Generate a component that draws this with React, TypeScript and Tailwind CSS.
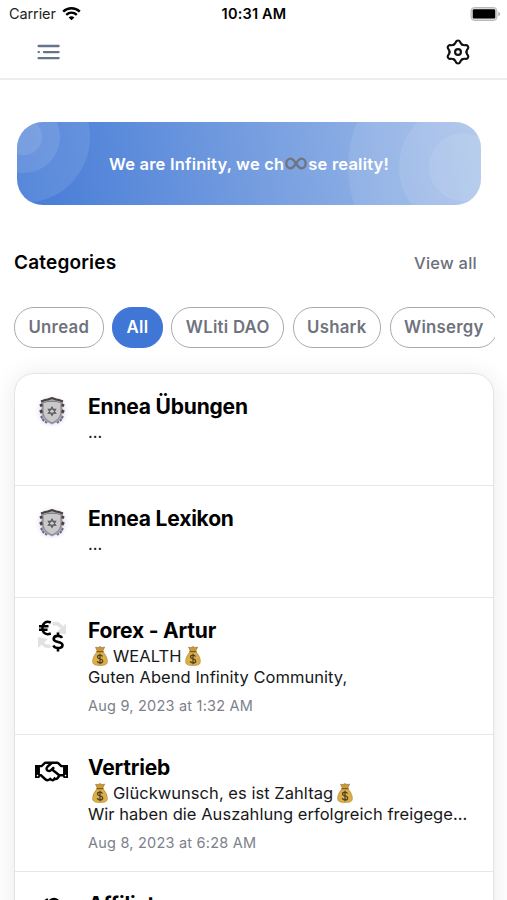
import { FaRegHandshake } from "react-icons/fa";

const categories = ["Unread", "All", "WLiti DAO", "Ushark", "Winsergy"];

type Channel = {
  title: string;
  icon: "crest" | "forex" | "handshake" | "people";
  lines: string[];
  date?: string;
};

const channels: Channel[] = [
  { title: "Ennea Übungen", icon: "crest", lines: ["..."] },
  { title: "Ennea Lexikon", icon: "crest", lines: ["..."] },
  {
    title: "Forex - Artur",
    icon: "forex",
    lines: ["$WEALTH$", "Guten Abend Infinity Community,"],
    date: "Aug 9, 2023 at 1:32 AM",
  },
  {
    title: "Vertrieb",
    icon: "handshake",
    lines: [
      "$Glückwunsch, es ist Zahltag$",
      "Wir haben die Auszahlung erfolgreich freigege...",
    ],
    date: "Aug 8, 2023 at 6:28 AM",
  },
  { title: "Affiliate", icon: "people", lines: [] },
];

function WifiIcon() {
  return (
    <svg className="h-[14px] w-[19px]" viewBox="0 0 19 14" fill="none" stroke="#000">
      <path d="M1.2 4.6c4.8-4.4 11.8-4.4 16.6 0" strokeWidth="2.5" />
      <path d="M4.2 7.9c3.1-2.8 7.5-2.8 10.6 0" strokeWidth="2.4" />
      <path d="M9.5 13.2 6.6 10.4c1.7-1.5 4.1-1.5 5.8 0z" fill="#000" stroke="none" />
    </svg>
  );
}

function BatteryIcon() {
  return (
    <svg className="h-[15px] w-[31px]" viewBox="0 0 31 15">
      <rect x="1" y=".5" width="26" height="13" rx="3.5" fill="#d8d8d8" stroke="#b9b9b9" />
      <rect x="2.8" y="2.3" width="22.4" height="9.2" rx="1.3" fill="#000" />
      <path d="M28.3 4.8c2.3.9 2.3 3.6 0 4.5z" fill="#aaa" />
    </svg>
  );
}

function MenuIcon() {
  return (
    <svg className="h-4 w-[23px]" viewBox="0 0 23 16" stroke="#64748b" strokeWidth="2.3" strokeLinecap="round">
      <path d="M1.6 2h20M6.9 8.1h14.7M1.6 8.1h.3M1.6 14.2h20" />
    </svg>
  );
}

const gearLobes = [0, 60, 120, 180, 240, 300];

function GearIcon() {
  return (
    <svg className="h-[26px] w-[26px]" viewBox="0 0 24 24" fill="none" stroke="#111" strokeWidth="2" strokeLinecap="round">
      {gearLobes.map((angle) => (
        <path
          key={angle}
          d="M8.1 5.25C9.5 4.45 9.7 3.8 10.1 2.6 10.6 1 13.4 1 13.9 2.6 14.3 3.8 14.5 4.45 15.9 5.25"
          transform={`rotate(${angle} 12 12)`}
        />
      ))}
      <circle cx="12" cy="12" r="2.7" />
    </svg>
  );
}

function InfinityIcon() {
  return (
    <svg className="mx-px h-[14px] w-[22px]" viewBox="0 0 22 14" fill="none" stroke="#6f7580" strokeWidth="2.3">
      <path d="M11 6.5C8.8 3.2 7.4 1.7 5.6 1.7a4.3 4.8 0 0 0 0 9.6C7.4 11.3 8.8 9.8 11 6.5s3.6-4.8 5.4-4.8a4.3 4.8 0 0 1 0 9.6C14.6 11.3 13.2 9.8 11 6.5z" />
    </svg>
  );
}

function MoneyBag() {
  return (
    <svg className="mr-[5px] ml-1 inline-block h-5 w-4 align-[-4px]" viewBox="0 0 16 20">
      <path d="M3.5 1.2 6 1.6 8 .5l2 1.1 2.7-.6L10.6 5.5H5.4z" fill="#c79a3c" stroke="#8d6420" strokeWidth=".5" />
      <path d="M5.3 5.6h5.4c2.6 2.3 4.7 6.3 4.7 9.6 0 3.2-1.8 4.3-7.4 4.3S.6 18.4.6 15.2c0-3.3 2.1-7.3 4.7-9.6z" fill="#dcae48" stroke="#a67a2a" strokeWidth=".5" />
      <path d="M4.9 5.7h6.2" stroke="#8a5a1c" strokeWidth="1.3" strokeLinecap="round" />
      <path d="M10.5 10.5C10 9.6 9.2 9.2 8 9.2c-1.5 0-2.5.7-2.5 1.8 0 2.7 5.2 1.2 5.2 3.9 0 1.2-1.1 1.9-2.7 1.9-1.4 0-2.4-.5-2.800-1.500M8 7.800v10.400" fill="none" stroke="#4f4224" strokeWidth="1.3" />
    </svg>
  );
}

function CrestIcon() {
  return (
    <svg className="h-[36px] w-[36px]" viewBox="0 0 36 36">
      <defs>
        <radialGradient id="crest-glow">
          <stop offset=".6" stopColor="#e6e6f8" />
          <stop offset="1" stopColor="#e6e6f8" stopOpacity="0" />
        </radialGradient>
      </defs>
      <circle cx="18" cy="18" r="17" fill="url(#crest-glow)" />
      <path d="M7 8.5 12 6l6-2 6 2 5 2.5-1 5 1 4-1 4 1 4-5 3-6 3-6-3-5-3 1-4-1-4 1-4z" fill="#aaa6b3" />
      <path d="M7 8.5 11 7l3-.5 4-1.5 4 1.500 3 .5 4 1.500" fill="none" stroke="#4b4043" strokeWidth="2" />
      <path d="m6.5 11 1.5 2.5M6.5 17l1.5 3M29.5 11 28 13.5M29.5 17 28 20" stroke="#4b3f40" strokeWidth="2.8" />
      <path d="m7 23 2 4 4 3M29 23l-2 4-4 3" fill="none" stroke="#66708e" strokeWidth="2" strokeDasharray="2.5 1" />
      <path d="M9 9.5c6-1.5 12-1.5 18 0v9c0 5-3.5 9-9 11.5-5.5-2.5-9-6.5-9-11.5z" fill="#cac9c9" stroke="#7d797d" strokeWidth=".9" />
      <path d="m18 14 3.700 6.300h-7.400zM18 22.500l-3.700-6.300h7.400z" fill="none" stroke="#5b5b5f" strokeWidth="1.1" />
    </svg>
  );
}

function ForexIcon() {
  return (
    <svg className="h-[36px] w-[36px]" viewBox="0 0 36 36" fill="none">
      <path d="M18.5 7.5c4-2 7-.5 9 3" stroke="#e2e2e2" strokeWidth="3.5" />
      <path d="M32 6.5v11l-10-2z" fill="#e2e2e2" />
      <path d="M16.5 29c-4 1-6.5 0-8.5-3.5" stroke="#e2e2e2" strokeWidth="3.5" />
      <path d="M4 31V20l10 2z" fill="#e2e2e2" />
      <path d="M16.8 5.5c-5-2-8.3.6-8.3 5.5s3.3 7.5 8.3 5.5M5 9.2h9.5M5 12.8h8.5" stroke="#000" strokeWidth="2.5" />
      <path d="M28 21c-.8-1.5-2.1-2.1-4.2-2.1-2.4 0-4.1 1-4.1 3 0 4 8.8 2.1 8.8 6.1 0 2-1.7 3.1-4.3 3.1-2.4 0-4-.9-4.9-2.6M24 15.5v3M24 31v3.5" stroke="#000" strokeWidth="2.6" />
    </svg>
  );
}

function PeopleIcon() {
  return (
    <svg className="mt-1.5 h-8 w-8" viewBox="0 0 32 32" fill="none" stroke="#000" strokeWidth="2.4">
      <path d="M7 5.5 11 2.6M13.5 6a4.8 4.8 0 0 1 9 0" strokeLinecap="round" />
      <circle cx="18" cy="7" r="5" />
      <path d="M8 26c0-8 20-8 20 0zM4 22c0-5 3-7 7-7" />
    </svg>
  );
}

function ChannelIcon({ icon }: { icon: Channel["icon"] }) {
  if (icon === "crest") return <CrestIcon />;
  if (icon === "forex") return <ForexIcon />;
  if (icon === "people") return <PeopleIcon />;
  return <FaRegHandshake className="h-[35px] w-[33px]" />;
}

// "$" marks the place of a money bag
function Line({ text }: { text: string }) {
  return (
    <p className="truncate">
      {text.split("$").map((part, i) => (
        <span key={i}>
          {i > 0 && <MoneyBag />}
          {part}
        </span>
      ))}
    </p>
  );
}

function ChannelRow({ channel }: { channel: Channel }) {
  return (
    <li className={`flex border-b border-[#e6e6e8] pt-[17px] ${channel.date ? "h-[137px]" : "h-[112px]"}`}>
      <div className="flex w-[73px] shrink-0 justify-center pt-0.5">
        <ChannelIcon icon={channel.icon} />
      </div>
      <div className="min-w-0 flex-1 pr-3">
        <h3 className="text-[21px] leading-8 font-bold tracking-[-0.2px]">{channel.title}</h3>
        <div className="-mt-px text-[16.5px] leading-[20.5px] tracking-[0.04px] text-[#17181a]">
          {channel.lines.map((line) => (
            <Line key={line} text={line} />
          ))}
        </div>
        {channel.date && (
          <p className="mt-2 text-[14.5px] leading-[21px] tracking-[0.22px] text-[#7c818b]">{channel.date}</p>
        )}
      </div>
    </li>
  );
}

export default function App() {
  return (
    <div className="h-[900px] w-[507px] overflow-hidden bg-white font-['Inter',sans-serif] text-black">
      <div className="grid h-7 grid-cols-3 items-center pr-1.5 pl-[9px] text-[14.5px]">
        <div className="flex items-center gap-1.5 tracking-[-0.1px] text-[#222]">
          Carrier
          <WifiIcon />
        </div>
        <div className="-ml-0.5 text-center font-semibold tracking-[0.2px] whitespace-nowrap">10:31 AM</div>
        <div className="flex justify-end">
          <BatteryIcon />
        </div>
      </div>
      <header className="flex h-[52px] items-center justify-between border-b-2 border-[#ededed] pr-9 pb-0.5 pl-[37px]">
        <MenuIcon />
        <GearIcon />
      </header>

      <section className="relative mt-[42px] ml-[17px] flex h-[83px] w-[464px] items-center justify-center overflow-hidden rounded-[26px] bg-linear-[80deg] from-[#447ad6] to-[#a4bfe9]">
        <svg className="absolute inset-0 h-full w-full" viewBox="0 0 464 83" fill="#fff">
          <g fillOpacity=".1">
            <circle cx="7" cy="15" r="66" />
            <circle cx="7" cy="15" r="36" />
            <circle cx="7" cy="15" r="18" />
          </g>
          <g fillOpacity=".09">
            <circle cx="446" cy="45" r="115" />
            <circle cx="446" cy="45" r="64" />
            <circle cx="446" cy="45" r="34" />
          </g>
        </svg>
        <p className="relative flex items-center pt-px text-[16.5px] font-semibold tracking-[0.2px] whitespace-nowrap text-white">
          We are Infinity, we ch
          <InfinityIcon />
          se reality!
        </p>
      </section>

      <div className="mt-[43px] flex h-[31px] items-center justify-between pr-[30px] pl-[14px]">
        <h2 className="text-[19px] font-semibold tracking-[0.18px]">Categories</h2>
        <a href="#" className="text-[16.5px] font-medium tracking-[0.25px] text-[#6b6f7a]">
          View all
        </a>
      </div>

      <nav className="mt-7 mr-3 ml-[14px] flex gap-[8.5px] overflow-hidden">
        {categories.map((name) => (
          <button
            key={name}
            className={`h-[41px] shrink-0 rounded-[20px] border-[1.5px] px-[13.5px] text-[16.8px] font-semibold tracking-[0.25px] ${
              name === "All"
                ? "border-[#4077d6] bg-[#4077d6] text-white"
                : "border-[#a7aab1] text-[#6f737e]"
            }`}
          >
            {name}
          </button>
        ))}
      </nav>

      <ul className="mt-[25px] mr-[13px] ml-[14px] rounded-[20px] border border-[#e4e4e6] bg-white shadow-[0_2px_24px_rgba(0,0,0,0.09)]">
        {channels.map((channel) => (
          <ChannelRow key={channel.title} channel={channel} />
        ))}
      </ul>
    </div>
  );
}
